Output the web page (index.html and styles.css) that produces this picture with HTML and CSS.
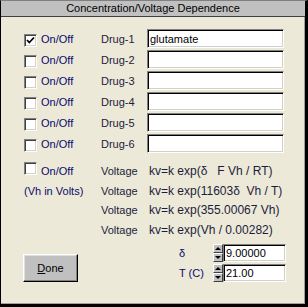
FILE: index.html
```html
<!DOCTYPE html>
<html lang="en">
<head>
    <meta charset="UTF-8">
    <title>Concentration/Voltage Dependence</title>
    <link rel="stylesheet" href="styles.css">
</head>
<body>
    <div class="window">
        <div class="title">Concentration/Voltage Dependence</div>

        <div class="drugs">
            <label class="toggle"><span class="check"><svg width="9" height="9" viewBox="0 0 9 9"><path d="M1 4 L3.3 6.5 L8 1.5" fill="none" stroke="#000" stroke-width="1.8"/></svg></span>On/Off</label>
            <span class="name">Drug-1</span>
            <input class="field" type="text" value="glutamate">

            <label class="toggle"><span class="check"></span>On/Off</label>
            <span class="name">Drug-2</span>
            <input class="field" type="text">

            <label class="toggle"><span class="check"></span>On/Off</label>
            <span class="name">Drug-3</span>
            <input class="field" type="text">

            <label class="toggle"><span class="check"></span>On/Off</label>
            <span class="name">Drug-4</span>
            <input class="field" type="text">

            <label class="toggle"><span class="check"></span>On/Off</label>
            <span class="name">Drug-5</span>
            <input class="field" type="text">

            <label class="toggle"><span class="check"></span>On/Off</label>
            <span class="name">Drug-6</span>
            <input class="field" type="text">
        </div>

        <div class="voltage">
            <label class="toggle low"><span class="check"></span>On/Off</label>
            <span class="name">Voltage</span>
            <span class="formula">kv=k exp(δ&nbsp;&nbsp; F Vh / RT)</span>

            <span class="units">(Vh in Volts)</span>
            <span class="name">Voltage</span>
            <span class="formula">kv=k exp(11603δ&nbsp; Vh / T)</span>

            <span></span>
            <span class="name">Voltage</span>
            <span class="formula">kv=k exp(355.00067 Vh)</span>

            <span></span>
            <span class="name">Voltage</span>
            <span class="formula">kv=k exp(Vh / 0.00282)</span>
        </div>

        <div class="bottom">
            <button class="done"><u>D</u>one</button>
            <div class="params">
                <span class="param">δ</span>
                <span class="spin"><span class="up"></span><span class="down"></span></span>
                <input class="field small" type="text" value="9.00000">

                <span class="param">T (C)</span>
                <span class="spin"><span class="up"></span><span class="down"></span></span>
                <input class="field small" type="text" value="21.00">
            </div>
        </div>
    </div>
</body>
</html>
```

FILE: styles.css
```css
body {
    margin: 0;
    background: #ece9d8;
    font-family: "Liberation Sans", Arial, sans-serif;
    font-size: 11px;
}
.window {
    width: 308px;
    height: 307px;
    box-sizing: border-box;
    border-style: solid;
    border-width: 1px 3px 3px 1px;
    border-color: #808080 #000 #000 #000;
    box-shadow: inset -1px -1px 0 #a0a0a0;
    background: #ece9d8;
}
.title {
    height: 15px;
    line-height: 15px;
    text-align: center;
    background: #c0c0c0;
    border-bottom: 1px solid #404040;
    color: #000;
}
.drugs {
    margin-top: 12px;
    padding-left: 23px;
    display: grid;
    grid-template-columns: 77px 46px 137px;
    grid-auto-rows: 19px;
    row-gap: 2px;
    align-items: center;
}
.toggle {
    display: flex;
    align-items: center;
    gap: 4px;
    color: #0a0a6e;
}
.check {
    width: 13px;
    height: 13px;
    box-sizing: border-box;
    margin-top: 4px;
    background: #fff;
    border: 1px solid;
    border-color: #808080 #fff #fff #808080;
    box-shadow: inset 1px 1px 0 #404040, inset -1px -1px 0 #d4d0c8;
    display: flex;
    align-items: center;
    justify-content: center;
}
.toggle.low .check {
    margin-top: -5px;
}
.name, .formula {
    color: #1c1c3c;
}
.formula {
    font-size: 12px;
}
.units {
    color: #0a0a6e;
}
.field {
    width: 137px;
    height: 19px;
    box-sizing: border-box;
    margin: 0;
    padding: 0 2px;
    border: 1px solid;
    border-color: #808080 #fff #fff #808080;
    box-shadow: inset 1px 1px 0 #000, inset -1px -1px 0 #d4d0c8;
    background: #fff;
    font-family: inherit;
    font-size: 11px;
    color: #000;
    outline: none;
}
.field.small {
    width: 63px;
    height: 18px;
}
.voltage {
    margin-top: 8px;
    padding-left: 23px;
    display: grid;
    grid-template-columns: 77px 48px auto;
    grid-template-rows: 20px 19px 20px 19px;
    align-items: center;
}
.bottom {
    margin-top: 5px;
    padding: 0 19px 0 22px;
    display: flex;
    justify-content: space-between;
    align-items: flex-start;
}
.done {
    margin-top: 10px;
    width: 55px;
    height: 28px;
    padding: 0;
    background: #c0c0c0;
    border: 1px solid;
    border-color: #fff #000 #000 #fff;
    box-shadow: inset -1px -1px 0 #808080, inset 1px 1px 0 #dfdfdf;
    font-family: inherit;
    font-size: 11px;
    color: #000;
}
.params {
    display: grid;
    grid-template-columns: 34px 10px 63px;
    grid-auto-rows: 18px;
    row-gap: 2px;
    align-items: center;
}
.param {
    color: #0a0a6e;
}
.spin {
    height: 18px;
    display: flex;
    flex-direction: column;
}
.spin span {
    flex: 1;
    background: #c0c0c0;
    border: 1px solid;
    border-color: #fff #404040 #404040 #fff;
    display: flex;
    align-items: center;
    justify-content: center;
}
.spin .up::before,
.spin .down::before {
    content: "";
    border-left: 3px solid transparent;
    border-right: 3px solid transparent;
}
.spin .up::before {
    border-bottom: 3px solid #000;
}
.spin .down::before {
    border-top: 3px solid #000;
}
```
